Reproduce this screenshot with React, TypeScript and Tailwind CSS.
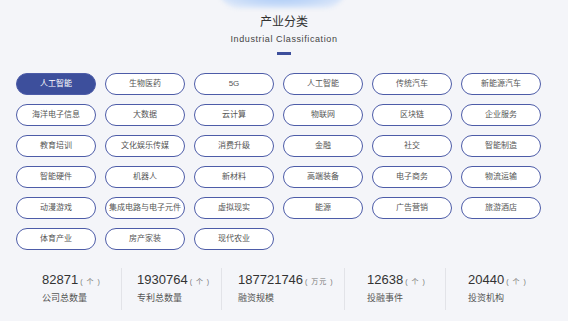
const industries = [
  "人工智能",
  "生物医药",
  "5G",
  "人工智能",
  "传统汽车",
  "新能源汽车",
  "海洋电子信息",
  "大数据",
  "云计算",
  "物联网",
  "区块链",
  "企业服务",
  "教育培训",
  "文化娱乐传媒",
  "消费升级",
  "金融",
  "社交",
  "智能制造",
  "智能硬件",
  "机器人",
  "新材料",
  "高端装备",
  "电子商务",
  "物流运输",
  "动漫游戏",
  "集成电路与电子元件",
  "虚拟现实",
  "能源",
  "广告营销",
  "旅游酒店",
  "体育产业",
  "房产家装",
  "现代农业",
];

const stats = [
  { value: "82871", unit: "个", label: "公司总数量", width: "w-[122px]", pad: "pl-[42px]" },
  { value: "1930764", unit: "个", label: "专利总数量", width: "w-[100px]", pad: "pl-[15px]" },
  { value: "187721746", unit: "万元", label: "融资规模", width: "w-[123px]", pad: "pl-[16px]" },
  { value: "12638", unit: "个", label: "投融事件", width: "w-[101px]", pad: "pl-[22px]" },
  { value: "20440", unit: "个", label: "投资机构", width: "flex-1", pad: "pl-[22px]" },
];

export default function App() {
  return (
    <div
      className="relative w-full h-[321px] overflow-hidden bg-[#f4f5f9]"
      style={{ fontFamily: '"Liberation Sans", "Noto Sans CJK SC", sans-serif' }}
    >
      {/* top glow */}
      <div className="absolute left-[218px] top-[-34px] w-[128px] h-[42px] rounded-full bg-[radial-gradient(ellipse_at_center,#8fbaf5_0%,#c2d8f8_55%,#eef2fa_100%)] blur-[2px]" />

      <div className="relative flex flex-col items-center pt-[14px]">
        <h2 className="text-[12px] leading-[16px] text-[#333]">产业分类</h2>
        <p className="mt-[4px] text-[9px] leading-[10px] tracking-[0.6px] text-[#444]">
          Industrial Classification
        </p>
        <div className="mt-[8px] h-[3px] w-[14px] bg-[#3d4f9c]" />
      </div>

      {/* Industry grid */}
      <div className="mt-[18px] pl-[16px] grid grid-cols-[repeat(6,80px)] gap-x-[9px] gap-y-[9px]">
        {industries.map((name, i) => (
          <div
            key={i}
            className={`h-[22px] flex items-center justify-center rounded-full border-[1.5px] border-[#4d5ca8] text-[8px] whitespace-nowrap ${
              i === 0 ? "bg-[#3d4f9c] text-white" : "bg-white text-[#555]"
            }`}
          >
            {name}
          </div>
        ))}
      </div>

      {/* Stats */}
      <div className="mt-[18px] flex">
        {stats.map((s, i) => (
          <div
            key={s.label}
            className={`${s.width} ${s.pad} h-[42px] pt-[3px] ${
              i < stats.length - 1 ? "border-r border-[#e2e3e8]" : ""
            }`}
          >
            <div className="flex items-baseline leading-[18px]">
              <span className="text-[13px] text-[#333]">{s.value}</span>
              <span className="ml-[2px] text-[7px] tracking-[1px] text-[#777]">
                ( {s.unit} )
              </span>
            </div>
            <div className="text-[9px] leading-[14px] text-[#555]">{s.label}</div>
          </div>
        ))}
      </div>
    </div>
  );
}
